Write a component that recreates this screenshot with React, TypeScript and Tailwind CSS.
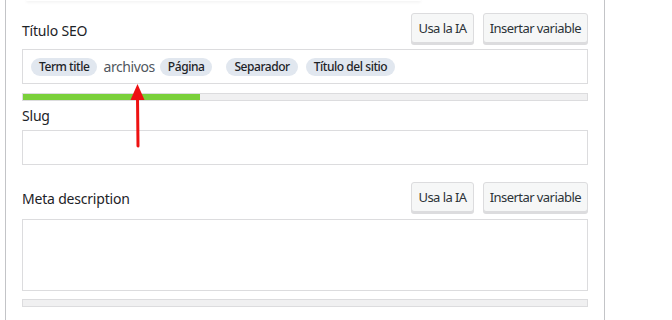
import React from 'react'

const font = { fontFamily: '"Noto Sans", "Open Sans", sans-serif' }

function ToolButton({ label }: { label: string }) {
  return (
    <button className="h-[30px] px-[6px] rounded-[3px] border border-[#dcdcde] bg-[#f6f7f7] text-[13px] tracking-[-0.55px] text-[#2c3338] shadow-[0_2px_0_#dcdcde] leading-none">
      {label}
    </button>
  )
}

function Pill({ label, className = '' }: { label: string; className?: string }) {
  return (
    <span className={`inline-flex items-center h-[18px] px-[8px] rounded-full bg-[#e1e7ef] text-[12px] tracking-[-0.45px] font-medium text-[#1d2327] leading-none ${className}`}>
      {label}
    </span>
  )
}

function Meter({ fill }: { fill: number }) {
  return (
    <div className="h-[8px] border border-[#dcdcde] bg-[#f0f0f1]">
      <div className="h-full bg-[#7ad03a]" style={{ width: `${fill}%` }} />
    </div>
  )
}

export default function App() {
  return (
    <div className="w-[672px] h-[320px] bg-white overflow-hidden relative" style={font}>
      <div className="ml-[5px] w-[600px] h-[320px] border-l border-r border-[#c3c4c7] px-[16px]">
        {/* bottom of the card above */}
        <div className="ml-[4px] w-[395px] h-[1px] rounded-b-md shadow-[0_1px_3px_rgba(0,0,0,0.12)]" />

        <div className="flex items-center justify-between mt-[12px]">
          <span className="text-[14px] tracking-[-0.2px] text-[#1d2327] pt-[5px]">Título SEO</span>
          <div className="flex gap-[9px]">
            <ToolButton label="Usa la IA" />
            <ToolButton label="Insertar variable" />
          </div>
        </div>

        <div className="mt-[6px] h-[35px] border border-[#dcdcde] flex items-center pl-[8px] text-[14px] tracking-[-0.4px] text-[#50575e]">
          <Pill label="Term title" />
          <span className="ml-[6px]">archivos</span>
          <Pill label="Página" className="ml-[5px]" />
          <Pill label="Separador" className="ml-[14px]" />
          <Pill label="Título del sitio" className="ml-[8px]" />
        </div>

        <div className="mt-[9px]">
          <Meter fill={31.3} />
        </div>

        <div className="mt-[5px] text-[14px] tracking-[-0.2px] text-[#1d2327] leading-[20px]">Slug</div>
        <div className="mt-[4px] h-[35px] border border-[#dcdcde]" />

        <div className="flex items-center justify-between mt-[17px]">
          <span className="text-[14px] tracking-[-0.2px] text-[#1d2327] pt-[3px]">Meta description</span>
          <div className="flex gap-[9px]">
            <ToolButton label="Usa la IA" />
            <ToolButton label="Insertar variable" />
          </div>
        </div>

        <div className="mt-[7px] h-[72px] border border-[#dcdcde]" />

        <div className="mt-[8px]">
          <Meter fill={0} />
        </div>
      </div>

      {/* annotation arrow */}
      <svg className="absolute left-[128px] top-[82px]" width="20" height="68" viewBox="0 0 20 68">
        <path d="M9.5 2 L2.5 18 L16.5 18 Z" fill="#ee1111" />
        <path d="M9.5 15 L10 64" stroke="#ee1111" strokeWidth="3" strokeLinecap="round" />
      </svg>
    </div>
  )
}
